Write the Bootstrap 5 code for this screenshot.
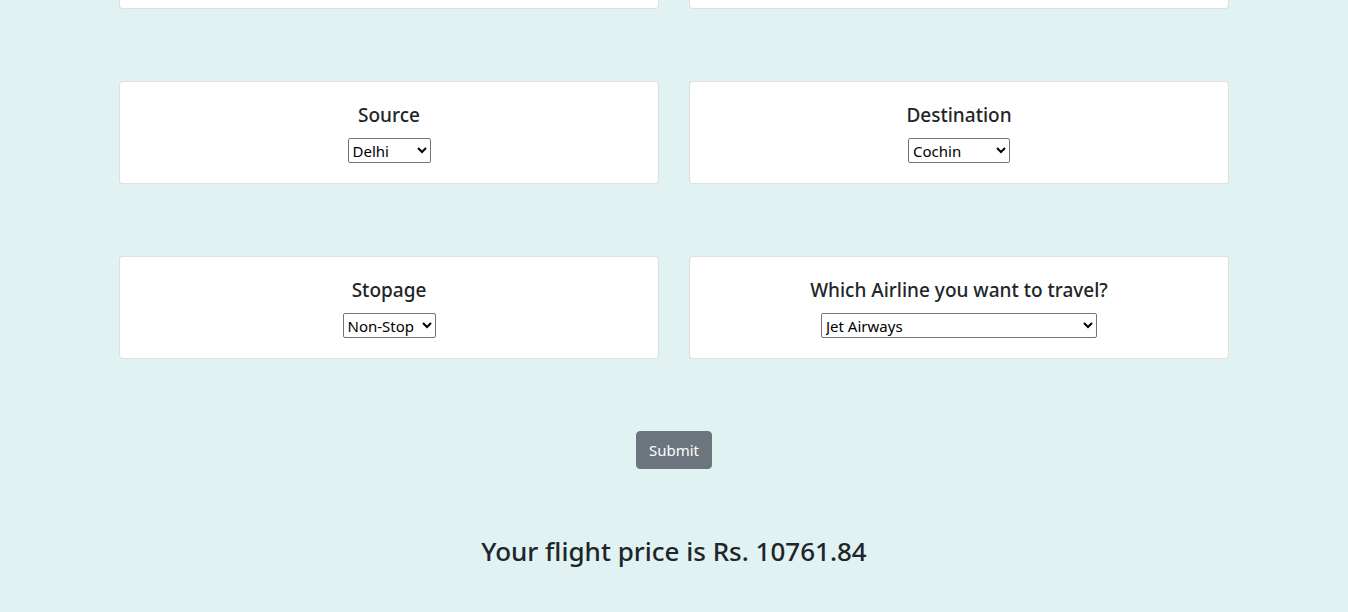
<!DOCTYPE html>
<html lang="en">
<head>
<meta charset="utf-8">
<meta name="viewport" content="width=device-width, initial-scale=1">
<title>Flight Price</title>
<link href="https://cdn.jsdelivr.net/npm/bootstrap@5.3.0/dist/css/bootstrap.min.css" rel="stylesheet">
<style>
  body { background: #e0f2f2; font-family: "Segoe UI", "Noto Sans", "Open Sans", sans-serif; }
  .container { --bs-gutter-x: 30px; max-width: 1140px; }
  .row { --bs-gutter-x: 30px; margin-bottom: 72px; }
  .card { --bs-card-border-radius: 4px; --bs-card-border-color: rgba(0, 0, 0, .125); --bs-card-spacer-y: 20px; --bs-card-spacer-x: 20px; }
  .card-end { height: 9px; border-top: 0; border-top-left-radius: 0; border-top-right-radius: 0; }
  .card label { font-size: 19px; font-weight: 500; line-height: 26px; margin-bottom: 10px; }
  .card select { height: 25px; padding: 0; font-size: 15px; color: #000; background: #fff; border: 1px solid #767676; border-radius: 2px; }
  .source { width: 83px; }
  .destination { width: 102px; }
  .stops { width: 93px; }
  .airline { width: 276px; }
  .btn { --bs-btn-border-radius: 4px; --bs-btn-padding-x: 12px; --bs-btn-font-size: 15px; height: 38px; }
  .price { font-size: 26px; font-weight: 500; line-height: 34px; margin-top: 65px; }
</style>
</head>
<body>
<main class="container text-center">
  <form>
    <div class="row row-cols-2">
      <div class="col"><div class="card card-end"></div></div>
      <div class="col"><div class="card card-end"></div></div>
    </div>
    <div class="row row-cols-2">
      <div class="col">
        <div class="card"><div class="card-body d-flex flex-column align-items-center">
          <label for="source">Source</label>
          <select id="source" class="source"><option>Delhi</option><option>Kolkata</option><option>Mumbai</option><option>Chennai</option></select>
        </div></div>
      </div>
      <div class="col">
        <div class="card"><div class="card-body d-flex flex-column align-items-center">
          <label for="destination">Destination</label>
          <select id="destination" class="destination"><option>Cochin</option><option>Delhi</option><option>Hyderabad</option><option>Kolkata</option></select>
        </div></div>
      </div>
    </div>
    <div class="row row-cols-2">
      <div class="col">
        <div class="card"><div class="card-body d-flex flex-column align-items-center">
          <label for="stops">Stopage</label>
          <select id="stops" class="stops"><option>Non-Stop</option><option>1</option><option>2</option><option>3</option></select>
        </div></div>
      </div>
      <div class="col">
        <div class="card"><div class="card-body d-flex flex-column align-items-center">
          <label for="airline">Which Airline you want to travel?</label>
          <select id="airline" class="airline"><option>Jet Airways</option><option>IndiGo</option><option>Air India</option></select>
        </div></div>
      </div>
    </div>
    <button type="submit" class="btn btn-secondary">Submit</button>
  </form>
  <h3 class="price mb-0">Your flight price is Rs. 10761.84</h3>
</main>
<script src="https://cdn.jsdelivr.net/npm/bootstrap@5.3.0/dist/js/bootstrap.bundle.min.js"></script>
</body>
</html>
